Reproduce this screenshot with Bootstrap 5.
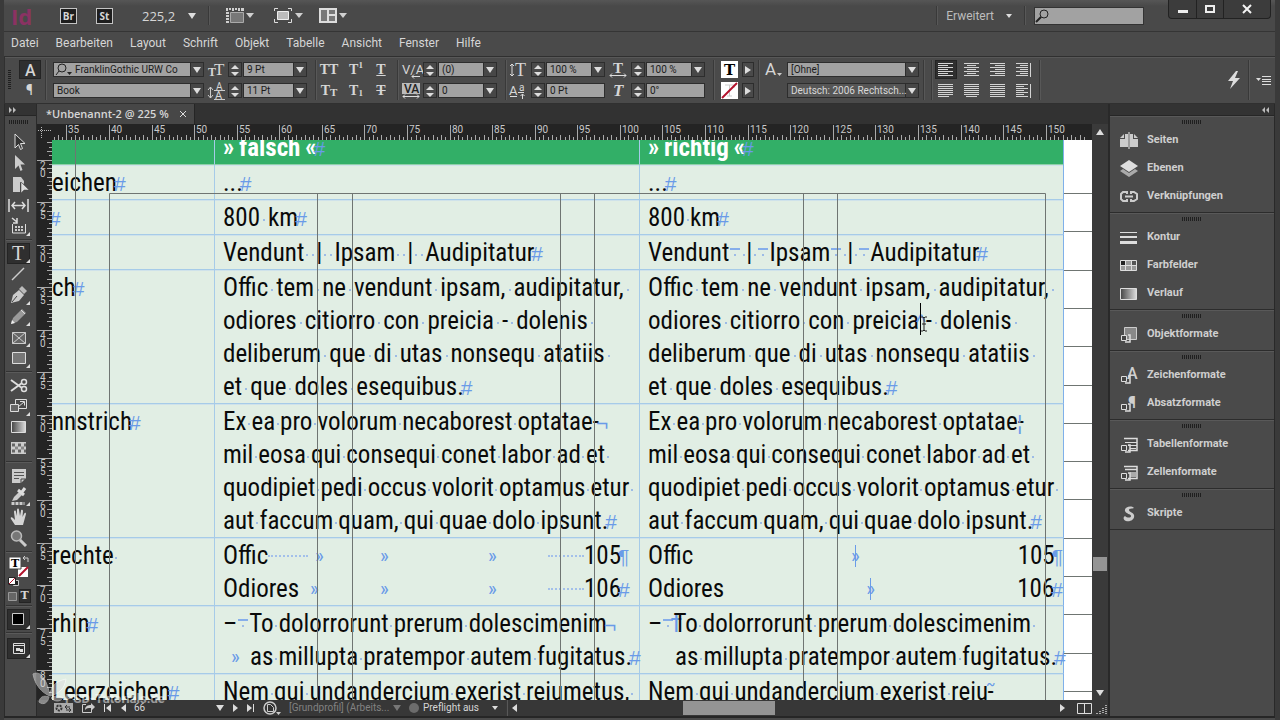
<!DOCTYPE html>
<html lang="de">
<head>
<meta charset="utf-8">
<meta name="viewport" content="width=device-width, initial-scale=1">
<title>Unbenannt-2</title>
<link href="https://cdn.jsdelivr.net/npm/bootstrap@5.3.0/dist/css/bootstrap.min.css" rel="stylesheet">
<style>
:root{--ui:#4a4a4a;--ink:#d6d6d6;--mark:#6a9be8}
body{background:#444;color:var(--ink);font:12px/16px Roboto,"Noto Sans",sans-serif}
button,select,input{font:inherit;color:inherit;padding:0;margin:0;border:0;border-radius:0;background:none}
button{display:flex;align-items:center;justify-content:center}
a{color:inherit;text-decoration:none}
svg{display:block;flex:none;overflow:visible}
svg text{fill:currentColor}
.app{height:100vh;border-left:4px solid #3a3a3a;border-right:5px solid #3a3a3a;overflow:hidden;background:var(--ui)}
.titlebar{height:32px;padding-left:7px;border-bottom:1px solid #353535;background:linear-gradient(#565656,#494949 6px)}
.logo{font:bold 22px/30px "Open Sans",sans-serif;color:#8b3263;width:49px}
.tag{width:17px;height:16px;border:1px solid #c4c4c4;background:#1e1e1e;font:bold 10px/14px "Open Sans",sans-serif;margin-right:19px}
.zoomsel{appearance:none;width:58px;height:20px;font:13px/20px "Open Sans",sans-serif;margin-left:10px;background:url("data:image/svg+xml,%3Csvg xmlns='http://www.w3.org/2000/svg' width='8' height='6'%3E%3Cpath d='M0 0h8L4 6z' fill='%23ddd'/%3E%3C/svg%3E") no-repeat right 4px center}
.vline{width:2px;align-self:stretch;border-left:1px solid #393939;border-right:1px solid #585858;margin-block:6px}
.find{width:110px;height:18px;background:#a2a2a2;border:1px solid #333}
.find input{width:88px}
.winbtns{height:19px;align-self:flex-start;border:1px solid #222;border-top:0;border-radius:0 0 4px 4px;background:#3c3c3c}
.winbtns button{height:18px;border-right:1px solid #222}
.winbtns button:last-child{border-right:0}
.menubar{height:24px;padding-left:7px;gap:17px}
.menubar a{line-height:22px}
.strip{height:48px;border:1px solid #303030;border-width:1px 0 1px 1px;box-shadow:inset 0 1px #585858}
.grip{background:repeating-linear-gradient(90deg,#1f1f1f 0 1px,transparent 1px 2px);width:20px;height:4px}
.gripv{background:repeating-linear-gradient(#1f1f1f 0 1px,transparent 1px 2px);width:3px;height:20px;margin:0 8px 0 3px}
.pair{display:grid;row-gap:6px;column-gap:1px;grid-auto-rows:15px;align-items:center}
.strip .vline{margin-block:3px;margin-right:2px}
.c-font{grid-template-columns:151px}
.c-size{grid-template-columns:19px 14px 64px}
.c-kern{grid-template-columns:21px 14px 59px}
.c-case{grid-template-columns:20px 16px 16px;column-gap:9px}
.c-fill{grid-template-columns:18px 12px;column-gap:3px}
.c-lang{grid-template-columns:24px 132px}
.c-align{grid-template-columns:22px 22px 22px 22px;column-gap:4px}
.combo,.num{height:15px;width:100%;border:1px solid #2d2d2d;background-color:#a2a2a2;color:#1c1c1c;font-size:10px;line-height:13px;padding-left:3px;min-width:0}
.combo{appearance:none;background-image:url("data:image/svg+xml,%3Csvg xmlns='http://www.w3.org/2000/svg' width='13' height='13'%3E%3Cpath d='M0 0h13v13H0z' fill='%23474747'/%3E%3Cpath d='M0 0h1v13H0z' fill='%232d2d2d'/%3E%3Cpath d='M3 4h8L7 10z' fill='%23ddd'/%3E%3C/svg%3E");background-repeat:no-repeat;background-position:right center}
.combo.dim{background-color:#565656;color:#d8d8d8}
.combo.glass{padding-left:21px}
.spin{height:15px;border:1px solid #2d2d2d}
.spin button{height:7px}
.on{background:#2f2f2f;box-shadow:inset 0 0 0 1px #242424}
.dock{width:32px;border-left:1px solid #2b2b2b}
.dockhead{height:12px;background:#333;border-bottom:1px solid #262626}
.dock button.tool{width:23px;height:21px}
.rule{height:2px;width:26px;border-top:1px solid #333;border-bottom:1px solid #5a5a5a;margin-block:2px}
.tabs{height:20px;background:#323232}
.tab{width:158px;background:#474747;border-right:1px solid #252525;font:600 11px/16px "Open Sans",sans-serif;padding-left:9px}
.ruler{background:#242424}
.ruler text{font:10px Roboto,sans-serif;fill:#c8c8c8}
.page{background:#fff;font:25px/33px "Roboto Condensed","Liberation Sans",sans-serif;color:#0a0a0a}
.sheet{border-collapse:separate;border-spacing:0;table-layout:fixed;width:1012px;margin-top:-10px;background:#e1eee4}
.sheet td,.sheet th{padding:1px 0 0 8px;border-left:1px solid #a6cbe8;border-bottom:1px solid #a6cbe8;white-space:pre;vertical-align:top;line-height:33px}
.sheet tr>:first-child{padding-left:0;border-left:0}
.sheet tr>:last-child{border-right:1px solid #7fb0ea}
.sheet td{box-shadow:inset 0 1px #cfe2ea}
.sheet th{background:#32af67;color:#fff;border-bottom-color:#8fd0a8;font-weight:bold}
.hid{color:var(--mark);font-family:"Liberation Sans",sans-serif;font-size:21px;margin-left:-3px;line-height:0;font-weight:normal}
.chev{color:var(--mark);font-size:21px;line-height:20px}
.sp{font-style:normal;display:inline-block;height:33px;vertical-align:top;width:5px;background:linear-gradient(#9dbbe6,#9dbbe6) no-repeat center 58%/2px 2px}
.loose .sp{width:8px}
.wide .sp{width:6px}
.en{display:inline-block;width:12px;height:33px;vertical-align:top;background:linear-gradient(#86aeea,#86aeea) no-repeat center 12px/10px 2px,linear-gradient(#9dbbe6,#9dbbe6) no-repeat center 58%/2px 2px}
.wave{color:var(--mark);font-size:16px;line-height:0;position:relative;top:-10px;margin-inline:-2px -8px}
.here{color:var(--mark);margin-right:-9px;margin-left:-4px;line-height:0}
.lead-dots{border-bottom:2px dotted #a3c0ea;height:2px}
.t1,.t2{display:grid;grid-template-columns:92px 65px 108px 60px 36px 1fr;align-items:center}
.t2{grid-template-columns:87px 70px 108px 60px 36px 1fr}
.bar{background:linear-gradient(var(--mark),var(--mark)) no-repeat center/1px 22px;line-height:24px}
.vbar{background:#3a3a3a;width:16px}
.thumb{background:#949494}
.status{height:16px;background:#373737;font-size:10px;white-space:nowrap}
.status>*{flex-shrink:0}
.panels{width:167px;border-left:2px solid #292929;border-right:1px solid #292929}
.pgroup{border-bottom:1px solid #2c2c2c;box-shadow:inset 0 1px #595959;padding-bottom:2px}
.pgroup a{height:28px;padding-left:10px;gap:8px;font-weight:700;font-size:11px;color:#cfcfcf}
.over{position:absolute;inset:0;pointer-events:none}
.water{position:absolute;left:32px;bottom:15px;color:#fff;opacity:.5;font:bold 13px/12px Roboto,sans-serif}
</style>
</head>
<body>
<div class="app d-flex flex-column">

<header class="titlebar d-flex align-items-center flex-shrink-0">
  <span class="logo">Id</span>
  <button class="tag">Br</button><button class="tag">St</button>
  <select class="zoomsel" aria-label="Zoom"><option>225,2</option></select>
  <span class="vline ms-2 me-3"></span>
  <button class="me-3" aria-label="Ansichtsoptionen"><svg width="28" height="18" viewBox="0 0 28 18" fill="#d0d0d0"><path d="M0 1h2v3H0zM3 1h2v2H3zM6 1h2v3H6zM9 1h2v2H9zM12 1h2v3h-2zM15 1h3v3h-3zM0 5h3v2H0zM0 8h3v2H0zM0 11h3v2H0zM0 14h3v2H0z"/><path d="M4.500 5.500h13v10h-13z" fill="#777" stroke="#aaa"/><path d="M20 6h8l-4 5z"/></svg></button>
  <button class="ms-1 me-3" aria-label="Bildschirmmodus"><svg width="29" height="18" viewBox="0 0 29 18"><path d="M.5 4V1.500H4M14 1.500h3.500V4M.5 12v3.500H4M14 15.500h3.500V12" fill="none" stroke="#ddd"/><path d="M3.500 4.500h11v8h-11z" fill="#bbb" stroke="#eee"/><path d="M21 6h8l-4 5z" fill="#d0d0d0"/></svg></button>
  <button aria-label="Dokumente anordnen"><svg width="28" height="18" viewBox="0 0 28 18"><path d="M0 1h18v15H0z" fill="#ddd"/><path d="M2 3h6v11H2zM10 3h6v4h-6zM10 9h6v5h-6z" fill="#777"/><path d="M20 6h8l-4 5z" fill="#d0d0d0"/></svg></button>
  <span class="vline ms-auto me-2"></span>
  <button class="gap-2" style="color:#bdbdbd">Erweitert<svg width="14" height="5"><path d="M4 1h6L7 5z" fill="#ddd"/></svg></button>
  <span class="vline ms-2 me-2"></span>
  <label class="find d-flex align-items-center"><svg width="18" height="14" viewBox="0 0 18 14" fill="none" stroke="#222"><circle cx="9" cy="5" r="4"/><path d="M6 8l-5 5" stroke-width="2"/></svg><input type="text" aria-label="Suche"></label>
  <div class="winbtns d-flex ms-4 me-1">
    <button style="width:28px" aria-label="Minimieren"><svg width="12" height="12"><path d="M1 7h10v3H1z" fill="#eee"/></svg></button>
    <button style="width:27px" aria-label="Maximieren"><svg width="12" height="12"><path d="M2 3h8v6H2z" fill="none" stroke="#eee" stroke-width="2"/></svg></button>
    <button style="width:46px" aria-label="Schließen"><svg width="12" height="12"><path d="M2 2l8 8M10 2l-8 8" stroke="#f4f4f4" stroke-width="2"/></svg></button>
  </div>
</header>

<nav class="menubar d-flex flex-shrink-0" aria-label="Menü">
  <a href="#">Datei</a><a href="#">Bearbeiten</a><a href="#">Layout</a><a href="#">Schrift</a><a href="#">Objekt</a><a href="#">Tabelle</a><a href="#">Ansicht</a><a href="#">Fenster</a><a href="#">Hilfe</a>
</nav>

<section class="strip d-flex align-items-center flex-shrink-0">
  <span class="gripv"></span>
  <div class="pair" style="width:22px"><button class="on" style="height:19px" aria-label="Zeichen"><svg width="16" height="16"><text x="3" y="14" font-size="16" font-weight="500">A</text></svg></button><button aria-label="Absatz"><svg width="16" height="15"><text x="4" y="12" font-size="14">¶</text></svg></button></div>
  <span class="vline ms-1"></span>
  <div class="pair c-font position-relative ms-1">
    <select class="combo glass" aria-label="Schrift"><option>FranklinGothic URW Co</option></select>
    <select class="combo" aria-label="Schnitt"><option>Book</option></select>
    <svg class="position-absolute" style="left:2px;top:1px" width="18" height="13" fill="none" stroke="#222"><circle cx="7" cy="5" r="4"/><path d="M4 8l-3 4"/><path d="M12 9h5l-2.500 3z" fill="#222" stroke="none"/></svg>
  </div>
  <div class="pair c-size ms-1">
    <svg width="18" height="15" viewBox="0 0 18 15" font-family="Liberation Serif"><text x="0" y="14" font-size="12" font-weight="bold">T</text><text x="6" y="13" font-size="17">T</text></svg>
    <span class="spin" data-spin></span><select class="combo" aria-label="Schriftgrad"><option>9 Pt</option></select>
    <svg width="18" height="16" viewBox="0 0 18 16"><path d="M2.500 4v11M0 7l2.500-3L5 7M0 12l2.500 3L5 12" fill="none" stroke="#ccc"/><text x="8" y="7" font-size="10">A</text><text x="7" y="16" font-size="11">A</text><path d="M6 7.500h11M6 16.500h11" stroke="#ccc"/></svg>
    <span class="spin" data-spin></span><select class="combo" aria-label="Zeilenabstand"><option>11 Pt</option></select>
  </div>
  <span class="vline ms-2"></span>
  <div class="pair c-case" style="font:bold 14px/15px 'Liberation Serif',serif">
    <button>TT</button><button>T<sup style="font-size:9px">1</sup></button><button><u>T</u></button>
    <button>T<span style="font-size:11px;padding-top:3px">T</span></button><button>T<sub style="font-size:9px">1</sub></button><button><s>T</s></button>
  </div>
  <span class="vline ms-2"></span>
  <div class="pair c-kern">
    <svg width="20" height="16"><text x="1" y="12" font-size="13">V/A</text><path d="M11 14.500h8M11 14.500l2-2M11 14.500l2 2" stroke="#ddd"/></svg>
    <span class="spin" data-spin></span><select class="combo" aria-label="Kerning"><option>(0)</option></select>
    <svg width="20" height="16"><path d="M1 0h18v11H1z" fill="#bbb"/><text x="3" y="10" font-size="12" font-weight="500" style="fill:#222">VA</text><path d="M2 13.500h16M4 11.500l-2 2 2 2M16 11.500l2 2-2 2" stroke="#ddd" fill="none"/></svg>
    <span class="spin" data-spin></span><select class="combo" aria-label="Laufweite"><option>0</option></select>
  </div>
  <span class="vline ms-2"></span>
  <div class="pair c-kern">
    <svg width="20" height="16"><path d="M3 2v12M1 4l2-2 2 2M1 12l2 2 2-2" fill="none" stroke="#ddd"/><text x="6" y="14" font-size="18" font-family="Liberation Serif">T</text></svg>
    <span class="spin" data-spin></span><select class="combo" aria-label="Vertikal skalieren"><option>100 %</option></select>
    <svg width="20" height="16"><text x="0" y="12" font-size="13">A</text><text x="10" y="8" font-size="10">a</text><path d="M1 13.500h7M9 9.500h6M13.500 16v-5M11.500 13l2-2 2 2" stroke="#ddd" fill="none"/></svg>
    <span class="spin" data-spin></span><input class="num" aria-label="Grundlinienversatz" value="0 Pt">
  </div>
  <div class="pair c-kern ms-1">
    <svg width="20" height="16"><text x="4" y="11" font-size="15" font-family="Liberation Serif" font-weight="bold">T</text><path d="M1 13.500h16M3 11.500l-2 2 2 2M15 11.500l2 2-2 2" stroke="#ddd" fill="none"/></svg>
    <span class="spin" data-spin></span><select class="combo" aria-label="Horizontal skalieren"><option>100 %</option></select>
    <svg width="20" height="16"><text x="4" y="13" font-size="17" font-style="italic" font-weight="bold" font-family="Liberation Serif">T</text></svg>
    <span class="spin" data-spin></span><input class="num" aria-label="Neigen" value="0°">
  </div>
  <span class="vline ms-2"></span>
  <div class="pair c-fill ms-1">
    <svg width="17" height="17"><path d="M0 0h17v17H0z" fill="#fff"/><text x="3" y="14" font-size="15" font-weight="bold" font-family="DejaVu Serif" style="fill:#000">T</text></svg><button class="spin" aria-label="Fläche"><svg width="8" height="10"><path d="M1 1l6 4-6 4z" fill="#ddd"/></svg></button>
    <svg width="17" height="17"><path d="M0 0h17v17H0z" fill="#fff"/><path d="M4 3h9v3M8.500 3v11M6 14h5" stroke="#ccc" fill="none"/><path d="M1 16L16 1" stroke="#b3122c" stroke-width="2"/></svg><button class="spin" aria-label="Kontur"><svg width="8" height="10"><path d="M1 1l6 4-6 4z" fill="#ddd"/></svg></button>
  </div>
  <span class="vline ms-1"></span>
  <div class="pair c-lang">
    <svg width="20" height="16"><text x="3" y="13" font-size="17">A</text><path d="M15 11h5l-2.500 3z" fill="#ccc"/></svg><select class="combo" aria-label="Zeichenformat"><option>[Ohne]</option></select>
    <span></span><select class="combo dim" aria-label="Sprache"><option>Deutsch: 2006 Rechtsch...</option></select>
  </div>
  <span class="vline ms-1"></span><span class="vline ms-1"></span>
  <div class="pair c-align" id="aligns"></div>
  <span class="vline ms-1"></span>
  <svg class="ms-auto" width="12" height="18" fill="#ddd"><path d="M8 0L0 10h5l-3 8 10-11H7l3-7z"/></svg>
  <span class="vline ms-2"></span>
  <button class="ms-1 me-1" aria-label="Bedienfeldmenü"><svg width="15" height="9"><path d="M0 2h5L2.500 5z" fill="#ddd"/><path d="M6 .5h9M6 3.500h9M6 5.500h9M6 8.500h9" stroke="#ddd"/></svg></button>
</section>

<main class="d-flex flex-fill" style="min-height:0">
  <aside class="dock flex-shrink-0 d-flex flex-column">
    <div class="dockhead d-flex align-items-center ps-1"><svg width="8" height="6"><path d="M0 0l3 3-3 3zM4 0l3 3-3 3z" fill="#bbb"/></svg></div>
    <div class="d-flex flex-column align-items-center" style="padding-right:4px">
      <span class="grip mt-1 mb-2"></span>
      <div id="tools" class="d-flex flex-column align-items-center"></div>
    </div>
  </aside>

  <section class="flex-fill d-flex flex-column" style="min-width:0;border-left:1px solid #2a2a2a">
    <div class="tabs d-flex flex-shrink-0"><div class="tab d-flex align-items-center justify-content-between pe-2"><span>*Unbenannt-2 @ 225 %</span><button aria-label="Schließen"><svg width="6" height="6"><path d="M0 0l6 6M6 0L0 6" stroke="#ddd"/></svg></button></div></div>
    <div class="d-flex flex-fill" style="min-height:0">
      <div class="flex-fill d-flex flex-column" style="min-width:0">
        <div class="d-flex ruler flex-shrink-0"><svg width="15" height="16"><path d="M4.500 3v12M1 6.500h13" stroke="#bbb" stroke-dasharray="1 1"/></svg><svg class="flex-fill overflow-hidden" id="hr" height="16" style="width:0"></svg></div>
        <div class="d-flex flex-fill overflow-hidden" style="min-height:0">
          <svg class="ruler" id="vr" width="15" height="560"></svg>
          <div class="page flex-fill position-relative overflow-hidden">
            <table class="sheet" id="sheet">
              <colgroup><col style="width:162px"><col style="width:425px"><col></colgroup>
              <tr><th> </th><th>»&#8201;falsch&#8201;«<span class="hid">#</span></th><th>»&#8201;richtig&#8201;«<span class="hid">#</span></th></tr>
              <tr><td>eichen<span class="hid">#</span></td><td>...<span class="hid">#</span></td><td>...<span class="hid">#</span></td></tr>
              <tr><td><span class="hid">#</span></td><td class="loose">800 km<span class="hid">#</span></td><td>800 km<span class="hid">#</span></td></tr>
              <tr><td></td><td class="wide">Vendunt  |  Ipsam  |  Audipitatur<span class="hid">#</span></td><td>Vendunt<i class="en"></i> | <i class="en"></i>Ipsam<i class="en"></i> | <i class="en"></i>Audipitatur<span class="hid">#</span></td></tr>
              <tr><td>ch<span class="hid">#</span></td><td class="loose">Offic tem ne vendunt ipsam, audipitatur, <br>odiores citiorro con preicia - dolenis <br>deliberum que di utas nonsequ atatiis <br>et que doles esequibus.<span class="hid">#</span></td><td class="loose">Offic tem ne vendunt ipsam, audipitatur, <br>odiores citiorro con preicia<span class="hid">^</span>- dolenis <br>deliberum que di utas nonsequ atatiis <br>et que doles esequibus.<span class="hid">#</span></td></tr>
              <tr><td>nnstrich<span class="hid">#</span></td><td>Ex ea pro volorum necaborest optatae-<span class="hid">¬</span><br>mil eosa qui consequi conet labor ad et <br>quodipiet pedi occus volorit optamus etur <br>aut faccum quam, qui quae dolo ipsunt.<span class="hid">#</span></td><td>Ex ea pro volorum necaborest optatae-<span class="hid" style="margin-left:-7px">¦</span><br>mil eosa qui consequi conet labor ad et <br>quodipiet pedi occus volorit optamus etur <br>aut faccum quam, qui quae dolo ipsunt.<span class="hid">#</span></td></tr>
              <tr><td>rechte </td><td><div class="t1"><span class="d-flex align-items-center">Offic<i class="lead-dots" style="width:40px"></i></span><span class="chev">»</span><span class="chev">»</span><span class="chev">»</span><i class="lead-dots"></i><span>105<span class="hid">¶</span></span></div><div class="t2"><span>Odiores</span><span class="chev">»</span><span class="chev">»</span><span class="chev">»</span><i class="lead-dots"></i><span>106<span class="hid">#</span></span></div></td><td><div class="d-flex align-items-center"><span>Offic</span><span class="chev bar flex-fill text-center">»</span><span>105<span class="hid">¶</span></span></div><div class="d-flex align-items-center"><span>Odiores</span><span class="chev bar flex-fill text-center">»</span><span>106<span class="hid">#</span></span></div></td></tr>
              <tr><td>rhin<span class="hid">#</span></td><td>–<i class="en"></i>To dolorrorunt prerum dolescimenim<span class="hid">¬</span><br><div class="d-flex align-items-center"><span class="chev ps-2 flex-shrink-0" style="width:27px">»</span><span>as millupta pratempor autem fugitatus.<span class="hid">#</span></span></div></td><td>–<i class="en"></i><span class="here">†</span>To dolorrorunt prerum dolescimenim <br><div style="padding-left:27px">as millupta pratempor autem fugitatus.<span class="hid">#</span></div></td></tr>
              <tr><td>Leerzeichen<span class="hid">#</span></td><td>Nem qui undandercium exerist reiumetus, </td><td>Nem qui undandercium exerist reiu<span class="wave">~</span>-</td></tr>
            </table>
            <svg class="over" width="1040" height="560" fill="none" stroke="#6f7572" id="guides"></svg>
          </div>
        </div>
      </div>
      <div class="vbar d-flex flex-column align-items-center flex-shrink-0">
        <svg width="8" height="6" style="margin-top:5px"><path d="M0 6h8L4 0z" fill="#ddd"/></svg>
        <span style="flex:423 1 0"></span><span class="thumb" style="width:14px;height:14px"></span><span style="flex:119 1 0"></span>
        <svg width="8" height="6" class="mb-1"><path d="M0 0h8L4 6z" fill="#ddd"/></svg>
      </div>
    </div>
    <footer class="status d-flex align-items-center flex-shrink-0">
      <svg width="20" height="12" style="margin-left:17px"><path d="M0 1h19v10H0z" fill="#aaa"/><circle cx="5" cy="6" r="2.500" fill="none" stroke="#333" stroke-width="2" stroke-dasharray="2 1"/><path d="M11 5h5M13 3l-2 2 2 2M17 8h-5M15 6l2 2-2 2" stroke="#333" fill="none"/></svg>
      <svg class="ms-2" width="14" height="12" fill="none" stroke="#ccc"><path d="M4 2.500H.5v8h9V8"/><path d="M3 8c0-4 3-5 6-5V1l4 4-4 4V6C6 6 5 6 3 8z" fill="#ccc" stroke="none"/></svg>
      <button class="ms-2" aria-label="Erste Seite"><svg width="8" height="10" fill="#ddd"><path d="M0 1h1v8H0zM7 1v8L2 5z"/></svg></button>
      <button class="ms-2" aria-label="Vorherige Seite"><svg width="6" height="10" fill="#ddd"><path d="M6 1v8L1 5z"/></svg></button>
      <select aria-label="Seite" style="appearance:none;width:90px;margin-left:8px"><option>66</option></select>
      <svg width="8" height="6" style="margin-left:-8px"><path d="M0 0h8L4 6z" fill="#ddd"/></svg>
      <button style="margin-left:9px" aria-label="Nächste Seite"><svg width="6" height="10" fill="#ddd"><path d="M0 1v8l5-4z"/></svg></button>
      <button class="ms-2" aria-label="Letzte Seite"><svg width="8" height="10" fill="#ddd"><path d="M6 1h1v8H6zM0 1v8l5-4z"/></svg></button>
      <svg class="ms-2 me-2" width="18" height="14" fill="none" stroke="#ccc"><circle cx="7" cy="7" r="6" stroke-width="1.500"/><path d="M4.500 3.500h3l3 3v4h-6z" fill="#333"/><path d="M13 11h5l-2.500 3z" fill="#ccc" stroke="none"/></svg>
      <span style="color:#828282;width:104px">[Grundprofil] (Arbeits...</span>
      <svg width="8" height="6"><path d="M0 0h8L4 6z" fill="#777"/></svg>
      <svg class="ms-2 me-1" width="10" height="10"><circle cx="5" cy="5" r="5" fill="#6c6c6c"/></svg>
      <span style="width:69px">Preflight aus</span>
      <svg width="6" height="4"><path d="M0 0h6L3 4z" fill="#ddd"/></svg>
      <span class="vline ms-2 my-0"></span>
      <div class="d-flex align-items-center flex-fill align-self-stretch ps-1 pe-1">
        <svg width="5" height="8"><path d="M5 0v8L0 4z" fill="#ddd"/></svg>
        <span style="flex:166 1 0"></span><span class="thumb" style="width:92px;height:14px"></span><span style="flex:286 1 0"></span>
        <svg width="5" height="8"><path d="M0 0v8l5-4z" fill="#ddd"/></svg>
      </div>
      <svg class="ms-2 me-1" width="15" height="11" fill="none" stroke="#ddd"><path d="M.5.5h14v10H.5zM7.500.5v10"/></svg>
      <svg width="12" height="12"><path d="M10 3v9M7 6v6M4 9v3M1 11v1" stroke="#aaa" stroke-dasharray="1 1" stroke-width="2"/></svg>
    </footer>
  </section>

  <aside class="panels flex-shrink-0">
    <div class="dockhead d-flex align-items-center justify-content-end pe-1"><svg width="8" height="6"><path d="M3 0L0 3l3 3zM7 0L4 3l3 3z" fill="#bbb"/></svg></div>
    <div id="panels"></div>
  </aside>
</main>
<div style="height:4px;border-top:2px solid #262626" class="flex-shrink-0"></div>
</div>

<div class="water d-flex align-items-end">
  <svg width="33" height="34" fill="#ddd" stroke="#fff"><path d="M1 3c8-4 14 6 17 22C10 22 3 14 1 3z"/><path d="M18 25c0-8 5-15 16-17-1 9-7 15-16 17z"/><path d="M17 26c-6-2-9 0-10 5 5 4 9 0 10-5zM19 27c4-3 9-2 12 0-3 4-8 4-12 0z"/></svg>
  <span>PSD-Tutorials.de</span>
</div>

<script src="https://cdn.jsdelivr.net/npm/bootstrap@5.3.0/dist/js/bootstrap.bundle.min.js"></script>
<script>
const $ = id => document.getElementById(id);

// stepper buttons
document.querySelectorAll('[data-spin]').forEach(s => {
  s.innerHTML = '<button class="w-100" aria-label="Mehr"><svg width="8" height="4"><path d="M0 4h8L4 0z" fill="#ddd"/></svg></button><button class="w-100" aria-label="Weniger"><svg width="8" height="4"><path d="M0 0h8L4 4z" fill="#ddd"/></svg></button>';
});

// paragraph alignment: [x, width, kind] of the short lines
const al = [[0,10,0],[3,9,0],[5,10,0],[4,8,1],[0,11,2],[2,11,2],[0,15,2],[0,8,1]];
$('aligns').innerHTML = al.map(([x,w,k],i) => {
  let p = '';
  for (let r = 0; r < 7; r++) {
    const short = k === 2 ? r === 6 : r % 2;
    p += short ? `M${x} ${r*2+.5}h${w}` : `M0 ${r*2+.5}h${k===1?12:15}`;
  }
  if (k === 1) p += 'M14.500 0v14';
  return `<button class="${i?'':'on'}" style="height:19px" aria-label="Ausrichtung ${i+1}"><svg width="16" height="14"><path d="${p}" stroke="#d4d4d4"/></svg></button>`;
}).join('');

// tools
const corner = '<path d="M23 16v4h-4z" fill="#ddd"/>';
const tools = [
 ['Auswahl','<path d="M8 2v14l3.500-3.500 2 5 2-1-2-5H18z" fill="#333" stroke="#ddd"/>'],
 ['Direktauswahl','<path d="M8 2v14l3.500-3.500 2 5.500 2-1-2-5.500H18z" fill="#ccc"/>'],
 ['Seite','<path d="M6 3h8l3 4v3l-4-2v10H6z" fill="#ccc"/><path d="M14 8v11l3-3h5z" fill="#ddd" stroke="#444" stroke-width=".5"/>'],
 ['Lücke','<path d="M2 4v13M21 4v13" stroke="#ddd" stroke-width="1.500"/><path d="M5 10.500h13M8 7l-3 3.500L8 14M15 7l3 3.500-3 3.500" fill="none" stroke="#ddd" stroke-width="1.500"/>'],
 ['Inhaltsaufnahme','<path d="M5 2l5 4M10 2v5H6" stroke="#ddd" fill="none" stroke-width="1.500"/><path d="M5.500 8v9h13V8" fill="none" stroke="#ddd"/><path d="M8 11h8M8 14h8" stroke="#ccc" stroke-width="2" stroke-dasharray="2 1"/>'+corner],
 0,
 ['Text','<text x="5" y="17" font-size="20" font-family="Liberation Serif">T</text>'+corner,1],
 ['Linie','<path d="M5 16L17 4" stroke="#ccc" stroke-width="1.500"/>'],
 ['Zeichenstift','<path d="M4 18l2-8 6-5 5 5-5 6z" fill="#ccc"/><path d="M12 4l3-3 5 5-3 3z" fill="#bbb"/><path d="M5 17l5-6" stroke="#444"/>'+corner],
 ['Buntstift','<path d="M4 18l2-6L15 3l4 4-9 9z" fill="#999"/><path d="M4 18l1-4 3 3z" fill="#eee"/><path d="M14 4l4 4" stroke="#ddd"/>'+corner],
 ['Rechteckrahmen','<path d="M5.500 5.500h13v11h-13zM5.500 5.500l13 11M18.500 5.500l-13 11" fill="#666" stroke="#ccc"/>'+corner],
 ['Rechteck','<path d="M5.500 4.500h13v11h-13z" fill="#777" stroke="#ddd"/>'+corner],
 0,
 ['Schere','<path d="M4 5l11 8M4 16l11-8" stroke="#ddd" stroke-width="2"/><circle cx="17" cy="7" r="2.500" fill="none" stroke="#ddd" stroke-width="1.500"/><circle cx="17" cy="14" r="2.500" fill="none" stroke="#ddd" stroke-width="1.500"/>'],
 ['Transformieren','<path d="M8.500 3.500h11v9h-11z" fill="none" stroke="#ddd"/><path d="M3.500 8.500h8v7h-8z" fill="#666" stroke="#ddd"/><path d="M11 11l6-5M13 5.500h4.500v4" stroke="#ddd" fill="none"/>'+corner],
 ['Verlauf','<defs><linearGradient id="g1"><stop stop-color="#444"/><stop offset="1" stop-color="#ddd"/></linearGradient></defs><path d="M4.500 4.500h14v11h-14z" fill="url(#g1)" stroke="#ddd"/>'],
 ['Weiche Verlaufskante','<path d="M4 4h15v12H4z" fill="#ccc"/><path d="M5 7h14M5 13h14" stroke="#666" stroke-width="3" stroke-dasharray="3 3"/><path d="M8 10h11" stroke="#888" stroke-width="3" stroke-dasharray="3 3"/>'],
 0,
 ['Notiz','<path d="M5 4h14v9l-5 5H5z" fill="#ccc"/><path d="M7 7.500h10M7 10.500h10M7 13.500h5" stroke="#555"/><path d="M14 18v-4h4" fill="none" stroke="#444"/>'],
 ['Pipette','<path d="M5 15l2-4 6-6 3 3-6 6z" fill="#ccc"/><path d="M11 4l6 5M15 6l3-4" stroke="#ddd" stroke-width="3"/><path d="M4.500 17.500h13" stroke="#ccc" stroke-width="3" stroke-dasharray="3 1"/>'+corner],
 ['Hand','<path d="M8 18l-4-6c-1-2 1-2 2-1l2 2L7 5c0-2 2-2 2 0l1 4V3c0-2 2-2 2 0l1 6 1-5c0-2 2-1 2 0l-.5 6 1.500-3c1-2 2-1 2 0l-3 11z" fill="#d4d4d4"/>'],
 ['Zoom','<circle cx="9.500" cy="8" r="5" fill="#777" stroke="#bbb" stroke-width="1.500"/><path d="M13 12l6 6" stroke="#ccc" stroke-width="3"/>'],
 0];
$('tools').innerHTML = tools.map(t => t ? `<button class="tool ${t[2]?'on':''}" aria-label="${t[0]}"><svg width="23" height="21">${t[1]}</svg></button>` : '<span class="rule"></span>').join('') + `
<svg width="24" height="34"><path d="M11 12h10v10H11z" fill="#fff"/><path d="M12 21l9-9" stroke="#b3122c" stroke-width="2"/><path d="M2 2h12v12H2z" fill="#fff" stroke="#444"/><text x="4" y="12" font-size="11" font-weight="bold" font-family="DejaVu Serif" style="fill:#000">T</text><path d="M17 3h4v4M18 1l-2 2 2 2" fill="none" stroke="#ccc"/><path d="M6.500 25.500h5v5h-5z" fill="#222" stroke="#ccc"/><path d="M1.500 22.500h7v7h-7z" fill="#fff" stroke="#222"/><path d="M2 29l6-6" stroke="#b3122c"/></svg>
<div class="d-flex"><button aria-label="Rahmen" style="width:12px;height:14px"><svg width="9" height="9"><path d="M.5.5h8v8h-8z" fill="#666" stroke="#999"/></svg></button><button class="on" aria-label="Textformat" style="width:12px;height:14px;font:bold 11px/14px 'DejaVu Serif'">T</button></div>
<span class="rule"></span>
<button class="on tool" aria-label="Schwarz anwenden"><svg width="23" height="21"><path d="M5.500 4.500h11v11h-11z" stroke="#ccc" fill="#000"/>${corner}</svg></button>
<span class="rule mb-1"></span>
<button class="on tool" aria-label="Modus"><svg width="23" height="21"><path d="M6.500 5.500h11v10h-11z" fill="none" stroke="#ddd"/><path d="M7 7h10v1H7zM9 10h4v3H9zM13 11h3v3h-3z" fill="#ddd"/>${corner}</svg></button>`;

// panels
const style = '<path d="M1.500 9.500h5v5h-5z" fill="#444" stroke="#ddd"/><path d="M8 9h2v7H5" fill="none" stroke="#ddd" stroke-width="1.500"/>';
const panels = [
 [['Seiten','<path d="M0 6l4-4v4zM5 2h3v13H0V7h5zM10 2h3v5h5v8h-8zM14 2l4 4h-4z" fill="#ccc"/><path d="M9 0v17" stroke="#eee"/>'],
  ['Ebenen','<path d="M9 0l9 6-9 6-9-6z" fill="#ddd"/><path d="M0 11l3-2 6 4 6-4 3 2-9 6z" fill="#aaa"/>'],
  ['Verknüpfungen','<path d="M7 6V4H3L1 6v5l2 2h4v-2M11 6V4h3l3 2v5l-3 2h-3v-2M5 8.500h8" fill="none" stroke="#ccc" stroke-width="2"/>']],
 [['Kontur','<path d="M0 3.500h17" stroke="#ddd"/><path d="M0 8h17" stroke="#ddd" stroke-width="2"/><path d="M0 13.500h17" stroke="#ddd" stroke-width="3"/>'],
  ['Farbfelder','<path d="M.5 3.500h16v10H.5z" fill="#999" stroke="#ddd"/><path d="M1 4h5v5H1z" fill="#222"/><path d="M12 4h4v5h-4z" fill="#555"/><path d="M5.500 3v11M11.500 3v11M0 8.500h17" stroke="#ddd"/>'],
  ['Verlauf','<path d="M.5 3.500h16v11H.5z" fill="url(#g1)" stroke="#ddd"/>']],
 [['Objektformate','<path d="M4.500 1.500h12v12h-12z" fill="#888" stroke="#ccc"/>'+style]],
 [['Zeichenformate','<text x="7" y="12" font-size="16" font-weight="500">A</text>'+style],
  ['Absatzformate','<text x="8" y="13" font-size="16">¶</text>'+style]],
 [['Tabellenformate','<path d="M4 2.500h13v12H8" fill="none" stroke="#ddd" stroke-width="1.500"/><path d="M5 6.500h12M8 9.500h9M10 12.500h6" stroke="#ddd"/>'+style],
  ['Zellenformate','<path d="M4 2.500h13v12H8M5 5.500h12" fill="none" stroke="#ddd" stroke-width="1.500"/><path d="M10 8h6v5h-6z" fill="#aaa"/>'+style]],
 [['Skripte','<path d="M14 3c-3-3-10-1-9 3 1 3 6 3 6 5s-4 2-6 0c-2 1-2 4 1 5 5 1 9-2 8-6-1-3-5-3-5-5s3-1 5-2z" fill="#ccc"/>']]];
$('panels').innerHTML = panels.map(g => '<nav class="pgroup"><span class="grip mx-auto d-block position-relative" style="top:4px;margin-bottom:6px"></span>' +
  g.map(p => `<a href="#" class="d-flex align-items-center"><svg width="19" height="17">${p[1]}</svg>${p[0]}</a>`).join('') + '</nav>').join('');

// rulers: five units are about 42 pixels
const U = 8.515;
let h = '', ht = '', v = '', vt = '';
for (let i = -13; i < 240; i++) {
  const x = Math.round(57 + i / 2 * U);
  if (x >= 0 && i % 10) h += `M${x+.5} ${i % 2 ? 13 : 11}V16`;
}
for (let u = 35; u <= 150; u += 5) {
  const x = Math.round(57 + (u - 40) * U);
  h += `M${x+.5} 1V16`;
  ht += `<text x="${x+2}" y="9">${u}</text>`;
}
for (let i = -4; i < 126; i++) {
  const y = Math.round(19.5 + i / 2 * U), u = 20 + i / 2;
  v += `M${u % 5 === 0 ? 0 : i % 2 ? 12 : 10} ${y+.5}H15`;
  if (u % 5 === 0) String(u).split('').forEach((c, k) => vt += `<text x="3" y="${y+9+k*8}">${c}</text>`);
}
$('hr').innerHTML = `<path d="${h}" stroke="#aaa"/>` + ht;
$('vr').innerHTML = `<path d="${v}" stroke="#aaa"/>` + vt;

// page guides, baseline grid and text cursor
let g = 'M23.500 0V560M57.500 560V53.500H993.500V560';
[265,300,508,542,751,785].forEach(x => g += `M${x}.5 53V560`);
for (let k = 0; k < 14; k++) g += `M1012 ${Math.round(53 + k*38.3)}.5H1040`;
$('guides').innerHTML = `<path d="${g}"/><path d="M868.500 163v32" stroke="#000"/><path d="M869 177h2l1 1 1-1h2M872 178v12M869 191h2l1-1 1 1h2M870 184h4" stroke="#222"/>`;

// visible space characters
const walk = document.createTreeWalker($('sheet'), NodeFilter.SHOW_TEXT), nodes = [];
while (walk.nextNode()) if (walk.currentNode.parentNode.closest('td')) nodes.push(walk.currentNode);
nodes.forEach(n => {
  if (!n.data.includes(' ')) return;
  const f = document.createDocumentFragment();
  n.data.split(/( )/).forEach(p => {
    if (p === ' ') { const s = document.createElement('i'); s.className = 'sp'; s.textContent = ' '; f.append(s); }
    else if (p) f.append(p);
  });
  n.replaceWith(f);
});
</script>
</body>
</html>
